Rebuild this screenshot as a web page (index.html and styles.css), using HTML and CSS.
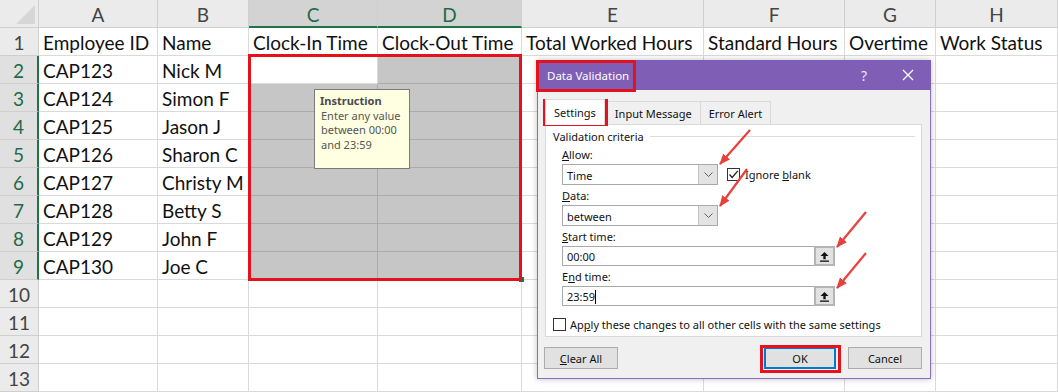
FILE: index.html
```html
<!DOCTYPE html>
<html lang="en">
<head>
    <meta charset="UTF-8">
    <title>Data Validation - Time</title>
    <link rel="stylesheet" href="styles.css">
</head>
<body>
<div class="page">
    <div class="sheet">
        <div class="corner"></div><div class="ch">A</div><div class="ch">B</div><div class="ch on">C</div><div class="ch on">D</div><div class="ch">E</div><div class="ch">F</div><div class="ch">G</div><div class="ch">H</div>
        <div class="rh">1</div><div class="c">Employee ID</div><div class="c">Name</div><div class="c">Clock-In Time</div><div class="c">Clock-Out Time</div><div class="c">Total Worked Hours</div><div class="c">Standard Hours</div><div class="c">Overtime</div><div class="c">Work Status</div>
        <div class="rh on">2</div><div class="c">CAP123</div><div class="c">Nick M</div><div class="c act"></div><div class="c sel"></div><div class="c"></div><div class="c"></div><div class="c"></div><div class="c"></div>
        <div class="rh on">3</div><div class="c">CAP124</div><div class="c">Simon F</div><div class="c sel"></div><div class="c sel"></div><div class="c"></div><div class="c"></div><div class="c"></div><div class="c"></div>
        <div class="rh on">4</div><div class="c">CAP125</div><div class="c">Jason J</div><div class="c sel"></div><div class="c sel"></div><div class="c"></div><div class="c"></div><div class="c"></div><div class="c"></div>
        <div class="rh on">5</div><div class="c">CAP126</div><div class="c">Sharon C</div><div class="c sel"></div><div class="c sel"></div><div class="c"></div><div class="c"></div><div class="c"></div><div class="c"></div>
        <div class="rh on">6</div><div class="c">CAP127</div><div class="c">Christy M</div><div class="c sel"></div><div class="c sel"></div><div class="c"></div><div class="c"></div><div class="c"></div><div class="c"></div>
        <div class="rh on">7</div><div class="c">CAP128</div><div class="c">Betty S</div><div class="c sel"></div><div class="c sel"></div><div class="c"></div><div class="c"></div><div class="c"></div><div class="c"></div>
        <div class="rh on">8</div><div class="c">CAP129</div><div class="c">John F</div><div class="c sel"></div><div class="c sel"></div><div class="c"></div><div class="c"></div><div class="c"></div><div class="c"></div>
        <div class="rh on">9</div><div class="c">CAP130</div><div class="c">Joe C</div><div class="c sel"></div><div class="c sel"></div><div class="c"></div><div class="c"></div><div class="c"></div><div class="c"></div>
        <div class="rh">10</div><div class="c"></div><div class="c"></div><div class="c"></div><div class="c"></div><div class="c"></div><div class="c"></div><div class="c"></div><div class="c"></div>
        <div class="rh">11</div><div class="c"></div><div class="c"></div><div class="c"></div><div class="c"></div><div class="c"></div><div class="c"></div><div class="c"></div><div class="c"></div>
        <div class="rh">12</div><div class="c"></div><div class="c"></div><div class="c"></div><div class="c"></div><div class="c"></div><div class="c"></div><div class="c"></div><div class="c"></div>
        <div class="rh">13</div><div class="c"></div><div class="c"></div><div class="c"></div><div class="c"></div><div class="c"></div><div class="c"></div><div class="c"></div><div class="c"></div>
    </div>

    <!-- input message shown for the selected cell -->
    <div class="tip">
        <div class="tip-title">Instruction</div>
        <div class="tip-text">Enter any value<br>between 00:00<br>and 23:59</div>
    </div>

    <div class="fill-handle"></div>

    <div class="dlg">
        <div class="dlg-title">
            <span class="dlg-name">Data Validation</span>
            <span class="dlg-help">?</span>
            <svg class="dlg-close" width="12" height="12" viewBox="0 0 12 12"><path d="M1 1L11 11M11 1L1 11" stroke="#fff" stroke-width="1.3"/></svg>
        </div>
        <div class="dlg-body">
            <div class="tabs">
                <div class="tab active">Settings</div>
                <div class="tab">Input Message</div>
                <div class="tab">Error Alert</div>
            </div>
            <div class="panel">
                <div class="legend"><span>Validation criteria</span></div>
                <div class="fields">
                    <div class="lbl"><u>A</u>llow:</div>
                    <div class="line">
                        <div class="combo">Time<span class="drop"><svg width="9" height="5" viewBox="0 0 9 5"><path d="M0.5 0.5L4.5 4.5L8.5 0.5" fill="none" stroke="#606060"/></svg></span></div>
                        <span class="check"><svg width="11" height="11" viewBox="0 0 11 11"><path d="M1.5 5.5L4.2 8.5L9.8 1.8" fill="none" stroke="#222" stroke-width="1.3"/></svg></span>
                        <span class="check-text">Ignore <u>b</u>lank</span>
                    </div>
                    <div class="lbl"><u>D</u>ata:</div>
                    <div class="line">
                        <div class="combo">between<span class="drop"><svg width="9" height="5" viewBox="0 0 9 5"><path d="M0.5 0.5L4.5 4.5L8.5 0.5" fill="none" stroke="#606060"/></svg></span></div>
                    </div>
                    <div class="lbl"><u>S</u>tart time:</div>
                    <div class="edit">00:00<span class="pick"><svg width="11" height="11" viewBox="0 0 11 11"><path d="M5.5 1L1.5 5H4.3V8.3H6.7V5H9.5Z" fill="#111"/><rect x="1" y="9.5" width="9" height="1.3" fill="#111"/></svg></span></div>
                    <div class="lbl">E<u>n</u>d time:</div>
                    <div class="edit">23:59<i class="caret"></i><span class="pick"><svg width="11" height="11" viewBox="0 0 11 11"><path d="M5.5 1L1.5 5H4.3V8.3H6.7V5H9.5Z" fill="#111"/><rect x="1" y="9.5" width="9" height="1.3" fill="#111"/></svg></span></div>
                </div>
                <div class="apply"><span class="check"></span>Ap<u>p</u>ly these changes to all other cells with the same settings</div>
            </div>
            <div class="buttons">
                <div class="btn"><u>C</u>lear All</div>
                <div class="btn btn-ok">OK</div>
                <div class="btn">Cancel</div>
            </div>
        </div>
    </div>

    <!-- red call-out marks -->
    <div class="mark mark-range"></div>
    <div class="mark mark-title"></div>
    <div class="mark mark-tab"></div>
    <div class="mark mark-ok"></div>

    <svg class="arrows" width="1058" height="392" viewBox="0 0 1058 392">
        <defs>
            <marker id="head" markerWidth="11" markerHeight="9" refX="10" refY="4.5" orient="auto" markerUnits="userSpaceOnUse">
                <path d="M0 0L11 4.5L0 9Z" fill="#e8403a"/>
            </marker>
        </defs>
        <line x1="750" y1="130" x2="720" y2="164" stroke="#e8403a" stroke-width="2.2" marker-end="url(#head)"/>
        <line x1="747" y1="169" x2="720" y2="206" stroke="#e8403a" stroke-width="2.2" marker-end="url(#head)"/>
        <line x1="866" y1="212" x2="837" y2="247" stroke="#e8403a" stroke-width="2.2" marker-end="url(#head)"/>
        <line x1="866" y1="253" x2="837" y2="288" stroke="#e8403a" stroke-width="2.2" marker-end="url(#head)"/>
    </svg>
</div>
</body>
</html>
```

FILE: styles.css
```css
body {
    margin: 0;
    background: #fff;
}
.page {
    position: relative;
    width: 1058px;
    height: 392px;
    overflow: hidden;
}

/* worksheet */
.sheet {
    display: grid;
    grid-template-columns: 39px 119px 91px 129px 144px 182px 141px 91px 122px;
    grid-auto-rows: 28px;
    font-family: Lato, sans-serif;
    font-size: 19px;
    color: #111;
}
.sheet > div {
    box-sizing: border-box;
    display: flex;
    align-items: center;
    white-space: nowrap;
    overflow: hidden;
    border-right: 1px solid #dadada;
    border-bottom: 1px solid #dadada;
}
.c {
    padding: 2px 0 0 4px;
}
.corner {
    position: relative;
    background: #ebebeb;
    border-color: #cfcfcf !important;
}
.corner::after {
    content: "";
    position: absolute;
    right: 3px;
    bottom: 3px;
    border-left: 19px solid transparent;
    border-bottom: 19px solid #d6d6d6;
}
.ch, .rh {
    justify-content: center;
    background: #ebebeb;
    color: #444;
    padding-top: 2px;
}
.ch {
    border-color: #cfcfcf !important;
}
.rh {
    border-color: #cfcfcf !important;
}
.ch.on {
    background: #d3d3d3;
    color: #1f6b45;
    border-bottom: 2px solid #217346 !important;
}
.rh.on {
    background: #e0e0e0;
    color: #1f6b45;
    border-right: 2px solid #217346 !important;
}
.sel {
    background: #c6c6c6;
    border-color: #ababab !important;
}
.act {
    background: #fff;
}

/* input message tooltip */
.tip {
    position: absolute;
    left: 314px;
    top: 89px;
    width: 96px;
    height: 80px;
    box-sizing: border-box;
    padding: 4px 0 0 5px;
    background: #ffffe1;
    border: 1px solid #7a7a7a;
    font-family: "Noto Sans", sans-serif;
    font-size: 11px;
    color: #555;
    line-height: 14.5px;
}
.tip-title {
    font-weight: bold;
    color: #4a4a4a;
}
.tip-text {
    padding-left: 1px;
}
.fill-handle {
    position: absolute;
    left: 519px;
    top: 277px;
    width: 5px;
    height: 5px;
    background: #217346;
}

/* data validation dialog */
.dlg {
    position: absolute;
    left: 537px;
    top: 60px;
    width: 394px;
    height: 319px;
    box-sizing: border-box;
    background: #f0f0f0;
    border: 1px solid #8670bd;
    box-shadow: 0 0 6px rgba(0, 0, 0, 0.25);
    font-family: "Noto Sans", sans-serif;
    font-size: 11px;
    color: #111;
}
.dlg-title {
    display: flex;
    align-items: center;
    height: 30px;
    margin: -1px -1px 0;
    padding: 0 17px 0 10px;
    background: #7f5eb5;
    color: #fff;
    font-size: 11.5px;
}
.dlg-name {
    flex: 1;
}
.dlg-help {
    margin-right: 35px;
    font-size: 14px;
    color: #eee6f6;
}
.dlg-body {
    padding: 9px 8px 0 7px;
}
.tabs {
    display: flex;
    align-items: flex-end;
    height: 25px;
}
.tab {
    height: 23px;
    box-sizing: border-box;
    padding: 4px 8px 0;
    border: 1px solid #d9d9d9;
    border-bottom: none;
    margin-left: -1px;
}
.tab.active {
    height: 26px;
    margin: 0 2px -1px 0;
    padding: 5px 8px 0;
    background: #fff;
    position: relative;
    z-index: 1;
}
.panel {
    height: 213px;
    box-sizing: border-box;
    background: #fff;
    border: 1px solid #d9d9d9;
    padding: 3px 6px 0 7px;
}
.legend {
    display: flex;
    align-items: center;
    height: 16px;
}
.legend::after {
    content: "";
    flex: 1;
    margin-left: 6px;
    border-top: 1px solid #dcdcdc;
}
.fields {
    padding-left: 9px;
}
.lbl {
    height: 16px;
    line-height: 16px;
    margin: 3px 0 1px;
}
.line {
    display: flex;
    align-items: center;
}
.combo {
    position: relative;
    width: 156px;
    height: 21px;
    box-sizing: border-box;
    border: 1px solid #a9a9a9;
    background: #fff;
    padding: 3px 0 0 4px;
}
.drop {
    position: absolute;
    right: 0;
    top: 0;
    width: 18px;
    height: 19px;
    display: flex;
    align-items: center;
    justify-content: center;
    background: #e3e3e3;
    border-left: 1px solid #c4c4c4;
}
.check {
    display: inline-flex;
    align-items: center;
    justify-content: center;
    width: 13px;
    height: 13px;
    box-sizing: border-box;
    border: 1px solid #333;
    background: #fff;
}
.line .check {
    margin-left: 9px;
}
.check-text {
    margin-left: 5px;
}
.edit {
    position: relative;
    width: 273px;
    height: 20px;
    box-sizing: border-box;
    border: 1px solid #a9a9a9;
    background: #fff;
    padding: 2px 0 0 4px;
}
.caret {
    display: inline-block;
    width: 1px;
    height: 14px;
    background: #000;
    vertical-align: -3px;
}
.pick {
    position: absolute;
    right: -1px;
    top: -1px;
    width: 21px;
    height: 20px;
    box-sizing: border-box;
    display: flex;
    align-items: center;
    justify-content: center;
    background: #e1e1e1;
    border: 2px solid #b4b4b4;
}
.apply {
    display: flex;
    align-items: center;
    margin-top: 11px;
}
.apply .check {
    margin-right: 4px;
}
.buttons {
    display: flex;
    margin-top: 10px;
}
.btn {
    width: 74px;
    height: 22px;
    box-sizing: border-box;
    display: flex;
    align-items: center;
    justify-content: center;
    background: #e1e1e1;
    border: 1px solid #adadad;
}
.btn:first-child {
    margin-left: -1px;
    margin-right: auto;
}
.btn-ok {
    width: 72px;
    border: 2px solid #0078d7;
    margin-right: 12px;
}

/* red call-outs */
.mark {
    position: absolute;
    box-sizing: border-box;
    border: 3px solid #e3121c;
}
.mark-range {
    left: 248px;
    top: 54px;
    width: 274px;
    height: 227px;
}
.mark-title {
    left: 536px;
    top: 60px;
    width: 100px;
    height: 32px;
}
.mark-tab {
    left: 543px;
    top: 99px;
    width: 65px;
    height: 27px;
}
.mark-ok {
    left: 760px;
    top: 345px;
    width: 81px;
    height: 28px;
}
.arrows {
    position: absolute;
    left: 0;
    top: 0;
}
```
